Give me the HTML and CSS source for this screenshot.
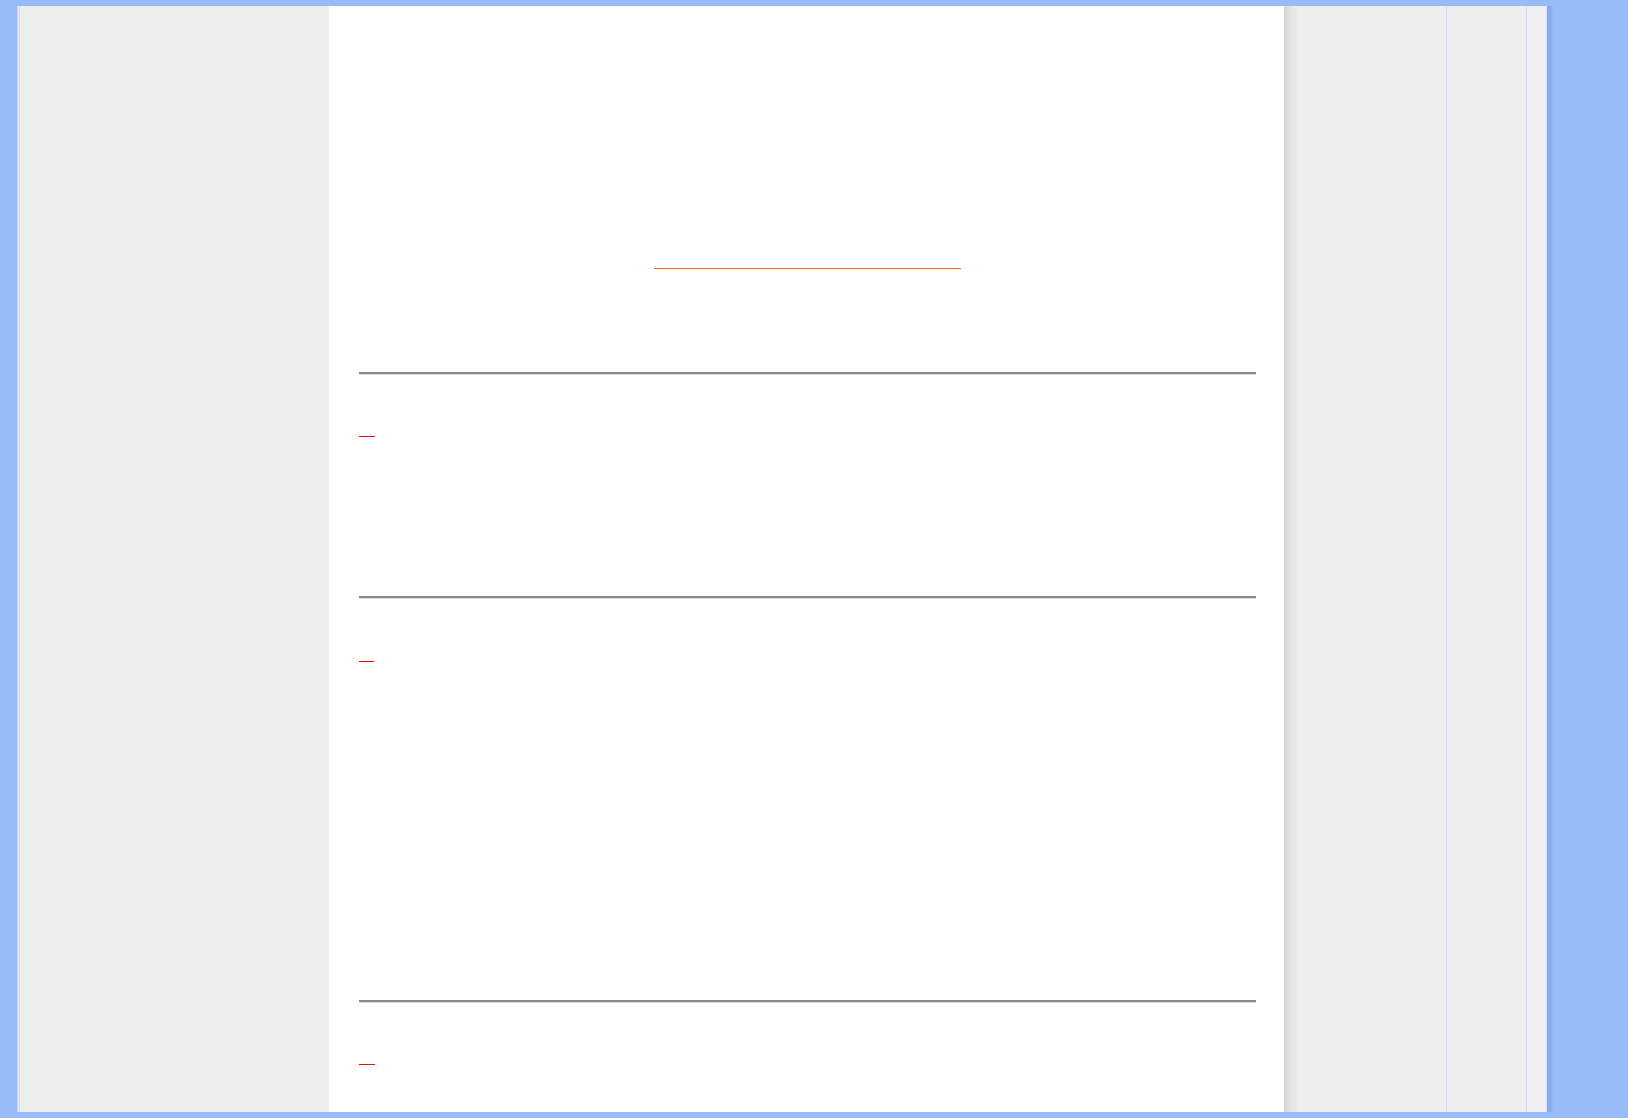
FILE: index.html
```html
<!DOCTYPE html>
<html>

<head>
    <meta charset="utf-8" />
    <title>Руководство пользователя</title>
    <link rel="stylesheet" href="styles.css">
</head>

<body>
    <div class="frame">
        <div class="edge-left"></div>
        <div class="side-left"></div>
        <div class="content">
            <div class="title-row">
                <a class="title-link" href="#top"></a>
            </div>
            <hr class="rule rule-first" />
            <a class="top-link top-first" href="#top"></a>
            <hr class="rule rule-second" />
            <a class="top-link top-second" href="#top"></a>
            <hr class="rule rule-third" />
            <a class="top-link top-third" href="#top"></a>
        </div>
        <div class="side-right"></div>
        <div class="side-column"></div>
        <div class="side-narrow"></div>
        <div class="edge-right"></div>
    </div>
</body>

</html>
```

FILE: styles.css
```css
html,
body {
    margin: 0;
    padding: 0;
}

body {
    background-color: #99bbf9;
    font-family: "Liberation Sans", Arial, sans-serif;
    overflow: hidden;
}

.frame {
    display: flex;
    height: 1106px;
    margin: 6px 0 6px 17px;
    width: 1536px;
    overflow: hidden;
}

.edge-left {
    width: 3px;
    background: linear-gradient(to right, #c2d2fa 0, #c2d2fa 1px, #e6ecfc 1px, #e6ecfc 2px, #c9d8fb 2px);
}

.side-left {
    width: 309px;
    background-color: #eeeeee;
}

.content {
    width: 955px;
    box-sizing: border-box;
    padding: 0 28px 0 30px;
    background-color: #ffffff;
}

.title-row {
    height: 263px;
    display: flex;
    justify-content: center;
    align-items: flex-end;
}

.title-link {
    display: block;
    width: 307px;
    height: 0;
    border-bottom: 1px solid #ff6600;
}

.rule {
    height: 0;
    margin: 0;
    border: none;
    border-top: 2px solid #8a8a8a;
    border-bottom: 1px solid #dedede;
}

.rule-first {
    margin-top: 103px;
}

.rule-second {
    margin-top: 159px;
}

.rule-third {
    margin-top: 338px;
}

.top-link {
    display: block;
    width: 16px;
    height: 0;
    border-bottom: 1px solid #ff0000;
}

.top-first {
    margin-top: 61px;
}

.top-second {
    margin-top: 62px;
    width: 15px;
}

.top-third {
    margin-top: 61px;
}

.side-right {
    width: 162px;
    background: linear-gradient(to right, #d6d6d6 0, #e6e6e6 8px, #eeeeee 16px);
    border-right: 1px solid #cddcf8;
}

.side-column {
    width: 79px;
    background-color: #eeeeee;
    border-right: 1px solid #cddcf8;
}

.side-narrow {
    width: 19px;
    background-color: #efefef;
}

.edge-right {
    width: 7px;
    background: linear-gradient(to right, #dfe6f6 0, #dfe6f6 1px, #8eaaee 1px, #8eaaee 5px, #99bbf9 7px);
}
```
